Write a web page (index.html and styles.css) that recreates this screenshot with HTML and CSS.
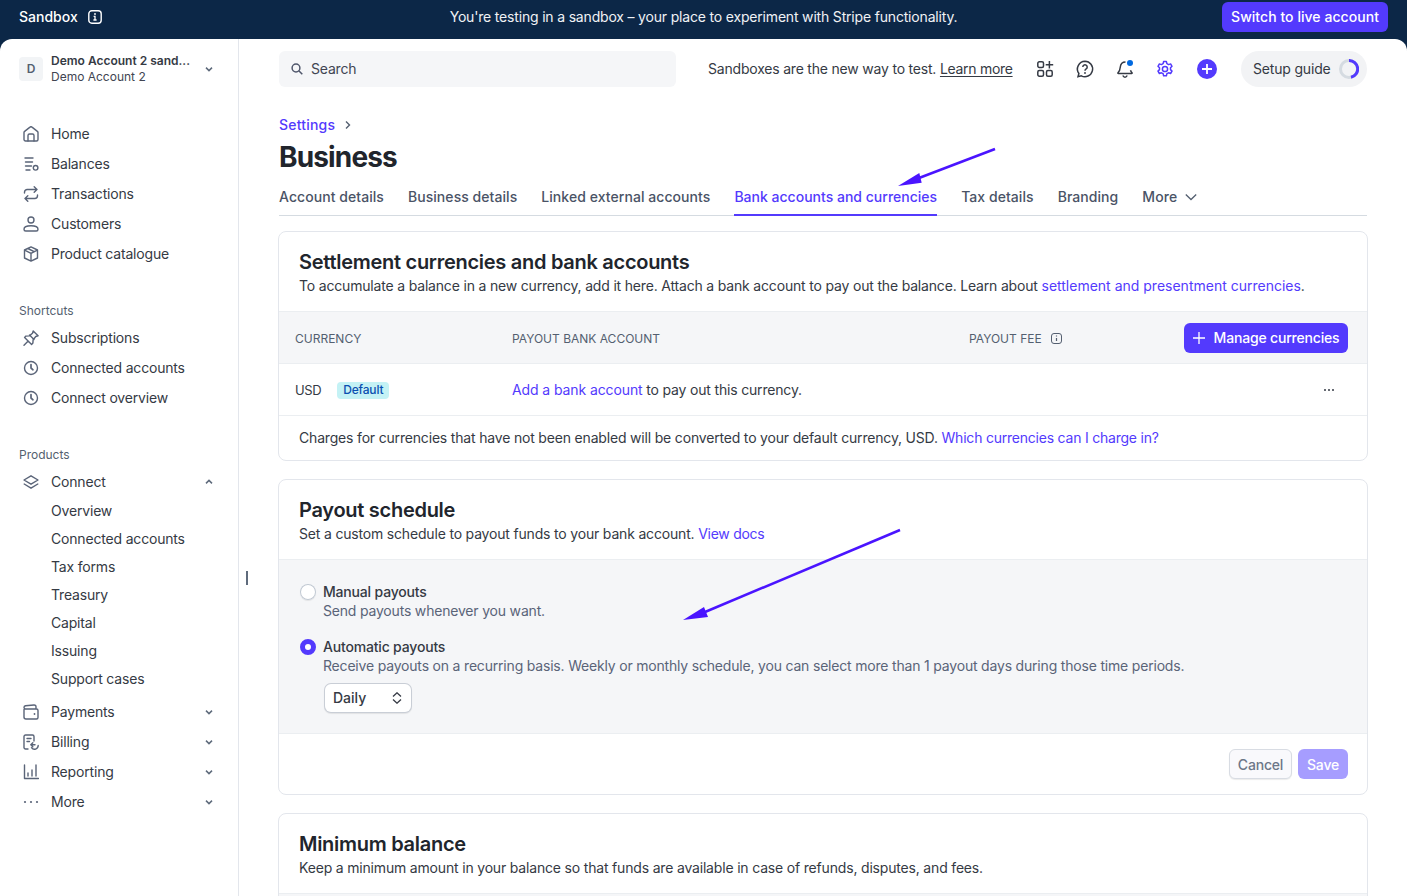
FILE: index.html
```html
<!DOCTYPE html>
<html lang="en">
<head>
<meta charset="utf-8">
<title>Business settings</title>
<link rel="stylesheet" href="styles.css">
</head>
<body>
<header class="topbar">
  <div class="topbar-left">
    <span>Sandbox</span>
    <svg class="i14" viewBox="0 0 14 14" fill="none" stroke="#fff" stroke-width="1.4"><rect x=".8" y=".8" width="12.4" height="12.4" rx="3"/><path d="M5.6 6.4H7v3.4M5.4 10h3.2" stroke-width="1.3"/><circle cx="7" cy="4" r=".9" fill="#fff" stroke="none"/></svg>
  </div>
  <div class="topbar-msg">You're testing in a sandbox – your place to experiment with Stripe functionality.</div>
  <div class="topbar-right"><button class="live-btn">Switch to live account</button></div>
</header>

<div class="shell">
  <aside class="sidebar">
    <div class="account">
      <div class="account-tile">D</div>
      <div class="account-text">
        <div class="account-name">Demo Account 2 sand...</div>
        <div class="account-sub">Demo Account 2</div>
      </div>
      <svg class="chev" viewBox="0 0 10 10" fill="none"><path d="M2 3.6 5 6.6l3-3"/></svg>
    </div>

    <nav class="nav-group nav-main">
      <a class="nav-item"><svg class="nav-icon" viewBox="0 0 16 16"><path d="M1 6.6c0-.5.2-.9.6-1.200L7 1.100c.6-.5 1.400-.5 2 0l5.400 4.300c.4.300.6.700.6 1.200v6.900c0 .8-.7 1.500-1.500 1.500h-11C1.700 15 1 14.300 1 13.500z"/><path d="M5 15V9.500C5 8.700 5.700 8 6.500 8h3c.8 0 1.500.7 1.500 1.500V15"/></svg>Home</a>
      <a class="nav-item"><svg class="nav-icon" viewBox="0 0 16 16"><path d="M2 2h8M2.500 6h7M2.500 10h6M3 14h4"/><circle cx="12.600" cy="11.800" r="2.300"/></svg>Balances</a>
      <a class="nav-item"><svg class="nav-icon" viewBox="0 0 16 16"><path d="M1.500 7V6.200C1.500 4.700 2.700 3.500 4.200 3.500H14M11.200.8 14 3.500l-2.800 2.700M14.500 9v.8c0 1.500-1.200 2.700-2.700 2.700H2M4.800 9.800 2 12.500l2.800 2.700"/></svg>Transactions</a>
      <a class="nav-item"><svg class="nav-icon" viewBox="0 0 16 16"><circle cx="8" cy="4" r="3"/><path d="M1 13.200C1 10.900 3.500 9.800 8 9.800s7 1.100 7 3.400c0 1-.7 1.800-1.700 1.800H2.700C1.700 15 1 14.200 1 13.200z"/></svg>Customers</a>
      <a class="nav-item"><svg class="nav-icon" viewBox="0 0 16 16"><path d="M8 .9 14.500 4v8L8 15.100 1.500 12V4zM1.700 4.100 8 7.300l6.300-3.200M8 7.300v7.700M4.800 2.500l6.400 3.200"/></svg>Product catalogue</a>
    </nav>

    <div class="nav-label">Shortcuts</div>
    <nav class="nav-group">
      <a class="nav-item"><svg class="nav-icon" viewBox="0 0 16 16"><path d="m1 15.200 4.200-4.200M10.200.9l4.900 4.900-2.300.7-2.700 3.200-.2 3.400-1.300 1.300-7-7 1.300-1.300 3.400-.2 3.200-2.700zM6.500 5l4.500 4.500"/></svg>Subscriptions</a>
      <a class="nav-item"><svg class="nav-icon" viewBox="0 0 16 16"><circle cx="8" cy="8" r="6.500"/><path d="M8 4.500V8l2 1.800" stroke-width="1.700"/></svg>Connected accounts</a>
      <a class="nav-item"><svg class="nav-icon" viewBox="0 0 16 16"><circle cx="8" cy="8" r="6.500"/><path d="M8 4.500V8l2 1.800" stroke-width="1.700"/></svg>Connect overview</a>
    </nav>

    <div class="nav-label">Products</div>
    <nav class="nav-group">
      <a class="nav-item"><svg class="nav-icon" viewBox="0 0 16 16"><path d="M8 1.800 15 6 8 10.200 1 6zM1.200 10 8 14.200 14.800 10"/></svg>Connect<svg class="chev" viewBox="0 0 10 10" fill="none"><path d="M2 6.400 5 3.400l3 3"/></svg></a>
      <a class="nav-sub">Overview</a>
      <a class="nav-sub">Connected accounts</a>
      <a class="nav-sub">Tax forms</a>
      <a class="nav-sub">Treasury</a>
      <a class="nav-sub">Capital</a>
      <a class="nav-sub">Issuing</a>
      <a class="nav-sub">Support cases</a>
      <a class="nav-item nav-after-sub"><svg class="nav-icon" viewBox="0 0 16 16"><path d="M1 5.500V13c0 1.100.9 2 2 2h10.500c.8 0 1.500-.7 1.500-1.500v-7c0-.8-.7-1.500-1.500-1.500H2.500C1.700 5 1 4.300 1 3.500 1 2.500 1.700 2 2.500 1.800L11 1c1-.1 2 .6 2 1.700V5"/><circle cx="11.500" cy="10" r=".9" fill="#5a6478" stroke="none"/></svg>Payments<svg class="chev" viewBox="0 0 10 10" fill="none"><path d="M2 3.600 5 6.600l3-3"/></svg></a>
      <a class="nav-item"><svg class="nav-icon" viewBox="0 0 16 16"><path d="M5 15H2.500C1.700 15 1 14.300 1 13.500v-11C1 1.700 1.700 1 2.500 1h7c.8 0 1.500.7 1.500 1.500V7M4 4.500h4M4 7.500h2.500M15.200 11.500a3.700 3.700 0 0 1-6.700 2.200M7.800 10.700H12M9.800 8.800 7.800 10.700l2 2"/></svg>Billing<svg class="chev" viewBox="0 0 10 10" fill="none"><path d="M2 3.600 5 6.600l3-3"/></svg></a>
      <a class="nav-item"><svg class="nav-icon" viewBox="0 0 16 16"><path d="M1.500 1v13.500H15.500M5 9v3M9 6v6M13 1v11"/></svg>Reporting<svg class="chev" viewBox="0 0 10 10" fill="none"><path d="M2 3.600 5 6.600l3-3"/></svg></a>
      <a class="nav-item"><svg class="nav-icon nav-dots" viewBox="0 0 16 16"><circle cx="2" cy="8" r="1.100"/><circle cx="8" cy="8" r="1.100"/><circle cx="14" cy="8" r="1.100"/></svg>More<svg class="chev" viewBox="0 0 10 10" fill="none"><path d="M2 3.600 5 6.600l3-3"/></svg></a>
    </nav>
  </aside>
  <div class="resize-handle"></div>

  <main class="main">
    <div class="toolbar">
      <div class="search">
        <svg class="i12" viewBox="0 0 12 12" fill="none" stroke="#4f566b" stroke-width="1.500"><circle cx="5" cy="5" r="3.900"/><path d="m8 8 3.300 3.300"/></svg>
        <span>Search</span>
      </div>
      <div class="toolbar-note">Sandboxes are the new way to test. <a class="underlined">Learn more</a></div>
      <div class="tool-icons">
        <svg class="tool-icon" viewBox="0 0 20 20" fill="none" stroke="#353a44" stroke-width="1.500"><rect x="2.800" y="2.800" width="5.700" height="5.700" rx="1.500"/><rect x="2.800" y="11.500" width="5.700" height="5.700" rx="1.500"/><rect x="11.500" y="11.500" width="5.700" height="5.700" rx="1.500"/><path d="M14.400 2v7.500M10.700 5.700h7.500"/></svg>
        <svg class="tool-icon" viewBox="0 0 20 20" fill="none" stroke="#353a44" stroke-width="1.500"><path d="M10 2.300a7.700 7.700 0 1 1-3.700 14.500l-3.300.9.900-3.200A7.700 7.700 0 0 1 10 2.300z"/><path d="M7.800 8a2.200 2.200 0 1 1 3.400 1.900c-.8.500-1.200 1-1.200 1.800"/><circle cx="10" cy="14" r=".9" fill="#353a44" stroke="none"/></svg>
        <svg class="tool-icon" viewBox="0 0 20 20" fill="none" stroke="#353a44" stroke-width="1.500"><path d="M10.500 3C7.500 3 5.600 5 5.300 8c-.2 2.500-.8 4.400-2.300 5.700-.3.300-.1.800.3.800h13.400c.4 0 .6-.5.300-.8-.7-.7-1.200-1.500-1.500-2.500M7.800 16.500c.5 1.100 1.300 1.700 2.200 1.700s1.700-.6 2.200-1.700"/><circle cx="15" cy="4" r="3" fill="#0069e0" stroke="none"/></svg>
        <svg class="tool-icon" viewBox="0 0 20 20" fill="none" stroke="#533afd" stroke-width="1.500"><circle cx="10" cy="10" r="2.600"/><path d="M8.600 2.600h2.800l.5 2.100 1.700.9 2-.7 1.400 2.400-1.500 1.500v1.800l1.500 1.500-1.400 2.400-2-.7-1.700.9-.5 2.100H8.600l-.5-2.100-1.700-.9-2 .7L3 12.100l1.500-1.500V8.800L3 7.300l1.400-2.400 2 .7 1.700-.9z" stroke-linejoin="round"/></svg>
        <svg class="tool-plus" viewBox="0 0 22 22"><circle cx="11" cy="11" r="10" fill="#533afd"/><path d="M11 6v10M6 11h10" stroke="#fff" stroke-width="1.800"/></svg>
      </div>
      <div class="setup-pill">
        <span>Setup guide</span>
        <svg class="setup-ring" viewBox="0 0 20 20" fill="none" stroke-width="3"><circle cx="10" cy="10" r="8.500" stroke="#d5dbe1"/><path d="M10 1.500A8.500 8.500 0 0 1 12 18.300" stroke="#533afd"/></svg>
      </div>
    </div>

    <div class="crumb"><a class="link link-med">Settings</a><svg class="i10" viewBox="0 0 10 10" fill="none" stroke="#545f70" stroke-width="1.400"><path d="m3 1.500 3.500 3.500L3 8.500"/></svg></div>
    <h1 class="page-title">Business</h1>

    <div class="tabs">
      <a class="tab">Account details</a>
      <a class="tab">Business details</a>
      <a class="tab">Linked external accounts</a>
      <a class="tab tab-active">Bank accounts and currencies</a>
      <a class="tab">Tax details</a>
      <a class="tab">Branding</a>
      <a class="tab tab-more">More<svg class="i12" viewBox="0 0 12 12" fill="none" stroke="#545f70" stroke-width="1.300"><path d="m.8 3.500 5.200 5 5.200-5"/></svg></a>
    </div>

    <section class="card card-first">
      <div class="card-head">
        <h2 class="card-title">Settlement currencies and bank accounts</h2>
        <p class="card-desc">To accumulate a balance in a new currency, add it here. Attach a bank account to pay out the balance. Learn about <a class="link link-wide">settlement and presentment currencies</a>.</p>
      </div>
      <div class="table-row table-head">
        <div>Currency</div>
        <div>Payout bank account</div>
        <div class="fee-cell">Payout fee <svg class="i11" viewBox="0 0 11 11" fill="none" stroke="#545f70"><rect x=".5" y=".5" width="10" height="10" rx="2.500"/><path d="M5.500 5v3M5.500 2.600v1" stroke-width="1.200"/></svg></div>
        <div class="action-cell"><button class="primary-btn"><svg class="i12" viewBox="0 0 12 12" stroke="#fff" stroke-width="1.300"><path d="M6 0v12M0 6h12"/></svg>Manage currencies</button></div>
      </div>
      <div class="table-row table-body">
        <div class="currency-cell"><span class="currency">USD</span><span class="badge">Default</span></div>
        <div class="payout-cell"><a class="link link-mid">Add a bank account</a> to pay out this currency.</div>
        <div></div>
        <div class="action-cell"><span class="dots-btn"><i></i><i></i><i></i></span></div>
      </div>
      <p class="card-note">Charges for currencies that have not been enabled will be converted to your default currency, USD. <a class="link link-note">Which currencies can I charge in?</a></p>
    </section>

    <section class="card">
      <div class="card-head">
        <h2 class="card-title">Payout schedule</h2>
        <p class="card-desc">Set a custom schedule to payout funds to your bank account. <a class="link link-tight">View docs</a></p>
      </div>
      <div class="options">
        <div class="option">
          <span class="radio"></span>
          <div>
            <div class="option-label">Manual payouts</div>
            <div class="option-desc">Send payouts whenever you want.</div>
          </div>
        </div>
        <div class="option option-second">
          <span class="radio radio-on"></span>
          <div>
            <div class="option-label">Automatic payouts</div>
            <div class="option-desc">Receive payouts on a recurring basis. Weekly or monthly schedule, you can select more than 1 payout days during those time periods.</div>
            <div class="select"><span>Daily</span><svg class="i12" viewBox="0 0 12 12" fill="none" stroke="#353a44" stroke-width="1.300"><path d="m2 4.500 4-3.700 4 3.700M2 7.500l4 3.700 4-3.700"/></svg></div>
          </div>
        </div>
      </div>
      <div class="card-foot">
        <button class="ghost-btn">Cancel</button>
        <button class="save-btn">Save</button>
      </div>
    </section>

    <section class="card">
      <div class="card-head">
        <h2 class="card-title">Minimum balance</h2>
        <p class="card-desc">Keep a minimum amount in your balance so that funds are available in case of refunds, disputes, and fees.</p>
      </div>
      <div class="card-tail"></div>
    </section>
  </main>
</div>

<svg class="arrows" viewBox="0 0 1407 896">
  <path class="arrow-line" d="M995 149 919 178"/>
  <polygon class="arrow-head" points="898,186 919.300,173 921.700,182.700"/>
  <path class="arrow-line" d="M900 530 705 612"/>
  <polygon class="arrow-head" points="683,620 704,607 708,617"/>
</svg>
</body>
</html>
```

FILE: styles.css
```css
* { box-sizing: border-box; }
html, body { margin: 0; height: 100%; }
body {
  position: relative;
  width: 1407px;
  height: 896px;
  overflow: hidden;
  background: #0c2747;
  font-family: Inter, "Liberation Sans", sans-serif;
  font-size: 14px;
  line-height: 20px;
  letter-spacing: -0.18px;
  color: #353a44;
}
a { text-decoration: none; color: inherit; }
button { font-family: inherit; cursor: pointer; letter-spacing: inherit; }
h1, h2, p { margin: 0; }

.i10 { width: 10px; height: 10px; flex: none; }
.i11 { width: 11px; height: 11px; flex: none; }
.i12 { width: 12px; height: 12px; flex: none; }
.i14 { width: 14px; height: 14px; flex: none; }

.topbar {
  height: 39px;
  display: grid;
  grid-template-columns: 1fr auto 1fr;
  padding: 2px 19px 7px;
  align-items: center;
  color: #fff;
}
.topbar-left { display: flex; align-items: center; gap: 10px; font-weight: 500; letter-spacing: 0; }
.topbar-msg { color: #f0f2f5; }
.topbar-right { display: flex; justify-content: flex-end; }
.live-btn {
  height: 30px;
  width: 166px;
  border: 0;
  border-radius: 6px;
  background: #533afd;
  color: #fff;
  font-size: 14px;
  font-weight: 500;
  letter-spacing: 0.05px;
  padding: 0 0 1px;
}

.shell {
  position: relative;
  display: flex;
  height: 857px;
  background: #fff;
  border-radius: 12px 12px 0 0;
  overflow: hidden;
}

.sidebar {
  width: 239px;
  flex: none;
  border-right: 1px solid #e3e6ec;
  padding: 18px 19px 0;
}
.account { display: flex; align-items: center; height: 24px; margin-bottom: 38px; letter-spacing: 0; }
.account-tile {
  width: 24px;
  height: 24px;
  border-radius: 4px;
  background: #f2f4f6;
  color: #545f70;
  font-size: 12px;
  font-weight: 600;
  display: flex;
  align-items: center;
  justify-content: center;
  margin-right: 8px;
}
.account-text { flex: 1; font-size: 12px; line-height: 16px; }
.account-name { font-weight: 600; color: #353a44; white-space: nowrap; }
.account-sub { color: #414552; }
.chev { width: 10px; height: 10px; flex: none; margin-left: auto; margin-right: 5px; }
.chev path { stroke: #5f6b7c; stroke-width: 1.500; fill: none; }
.account .chev { margin-left: 0; }

.nav-group { display: flex; flex-direction: column; }
.nav-item {
  height: 30px;
  display: flex;
  align-items: center;
  padding-left: 4px;
  color: #353a44;
}
.nav-icon {
  width: 16px;
  height: 16px;
  flex: none;
  margin-right: 12px;
  fill: none;
  stroke: #5a6478;
  stroke-width: 1.400;
  stroke-linecap: round;
  stroke-linejoin: round;
}
.nav-dots { fill: #5a6478; stroke: none; }
.nav-sub { height: 28px; display: flex; align-items: center; padding-left: 32px; color: #353a44; }
.nav-after-sub { margin-top: 4px; }
.nav-label {
  font-size: 12px;
  line-height: 16px;
  letter-spacing: 0;
  color: #545f70;
  margin: 34px 0 4px;
}
.resize-handle {
  position: absolute;
  left: 246px;
  top: 532px;
  width: 2px;
  height: 14px;
  background: #5f6b7c;
}

.main { flex: 1; min-width: 0; padding: 12px 40px 0; }

.toolbar { display: flex; align-items: center; height: 36px; }
.search {
  width: 397px;
  height: 36px;
  background: #f5f6f8;
  border-radius: 6px;
  display: flex;
  align-items: center;
  gap: 8px;
  padding-left: 12px;
  color: #414552;
}
.toolbar-note { margin-left: 32px; color: #353a44; white-space: nowrap; letter-spacing: -0.2px; }
.underlined { text-decoration: underline; text-underline-offset: 2px; letter-spacing: -0.3px; }
.tool-icons { display: flex; align-items: center; gap: 20px; margin-left: 22px; }
.tool-icon { width: 20px; height: 20px; flex: none; }
.tool-plus { width: 22px; height: 22px; flex: none; margin-left: 1px; }
.setup-pill {
  margin-left: auto;
  width: 126px;
  height: 36px;
  border-radius: 18px;
  background: #f2f3f5;
  display: flex;
  align-items: center;
  padding-left: 12px;
  gap: 8px;
  white-space: nowrap;
}
.setup-ring { width: 20px; height: 20px; flex: none; }

.crumb { display: flex; align-items: center; gap: 8px; margin-top: 28px; height: 20px; }
.page-title { font-size: 28px; line-height: 36px; font-weight: 700; color: #21252c; margin-top: 4px; letter-spacing: -0.85px; }

.tabs {
  display: flex;
  gap: 24px;
  margin-top: 12px;
  border-bottom: 1px solid #d5dbe1;
  letter-spacing: 0.06px;
}
.tab {
  padding-bottom: 8px;
  font-weight: 500;
  color: #4a5366;
  white-space: nowrap;
}
.tab-active { color: #533afd; box-shadow: inset 0 -2px 0 #533afd; margin-bottom: -1px; padding-bottom: 9px; letter-spacing: 0.01px; }
.tab-more { display: flex; align-items: flex-start; gap: 8px; }
.tab-more .i12 { margin-top: 4px; }

.card {
  margin: 18px -1px 0;
  border: 1px solid #e3e6ec;
  border-radius: 8px;
  overflow: hidden;
  background: #fff;
}
.card-first { margin-top: 15px; }
.card-head { padding: 18px 20px 15px; }
.card-title { font-size: 20px; line-height: 24px; font-weight: 600; color: #21252c; letter-spacing: -0.28px; }
.card-desc { margin-top: 2px; color: #353a44; }
.link { color: #533afd; }
.link-med { font-weight: 500; letter-spacing: 0.2px; }
.link-wide { letter-spacing: 0; }
.link-mid { letter-spacing: -0.1px; }
.link-tight { letter-spacing: -0.27px; }
.link-note { letter-spacing: -0.22px; }

.table-row {
  display: grid;
  grid-template-columns: 217px 457px 1fr auto;
  align-items: center;
  padding: 0 19px 0 16px;
  border-top: 1px solid #ebeef1;
}
.table-head {
  height: 52px;
  background: #f5f6f8;
  font-size: 12px;
  color: #545f70;
  text-transform: uppercase;
  letter-spacing: 0;
}
.table-head > div:not(.action-cell) { padding-top: 2px; }
.table-body { height: 52px; }
.fee-cell { display: flex; align-items: center; gap: 9px; }
.action-cell { display: flex; justify-content: flex-end; }
.primary-btn {
  height: 30px;
  width: 164px;
  border: 0;
  border-radius: 6px;
  background: #533afd;
  color: #fff;
  font-size: 14px;
  font-weight: 500;
  display: flex;
  align-items: center;
  justify-content: center;
  gap: 9px;
  padding: 0;
  text-transform: none;
  letter-spacing: -0.18px;
}
.currency-cell { display: flex; align-items: center; gap: 16px; }
.currency { font-size: 13px; letter-spacing: -0.4px; }
.badge {
  height: 17px;
  margin-top: 1px;
  padding: 0 6px;
  border-radius: 4px;
  background: #c4f2f5;
  color: #0b4fb0;
  font-size: 12px;
  line-height: 16px;
  font-weight: 500;
}
.dots-btn { display: flex; gap: 2px; margin-right: 14px; }
.dots-btn i { width: 2px; height: 2px; border-radius: 50%; background: #353a44; }
.card-note { border-top: 1px solid #ebeef1; padding: 12px 20px; }

.options {
  background: #f5f6f8;
  border-top: 1px solid #ebeef1;
  padding: 22px 20px 21px 21px;
}
.option { display: flex; gap: 7px; }
.option-second { margin-top: 17px; }
.option-label { line-height: 19px; font-weight: 500; color: #353a44; }
.option-desc { line-height: 19px; color: #5a6478; letter-spacing: -0.19px; }
.radio {
  width: 16px;
  height: 16px;
  flex: none;
  margin-top: 2px;
  border-radius: 50%;
  background: #fff;
  box-shadow: 0 0 0 1px #c0c8d2 inset, 0 1px 1px rgba(0,0,0,.08);
}
.radio-on { background: #fff; border: 5px solid #533afd; box-shadow: none; }
.select {
  display: flex;
  align-items: center;
  justify-content: space-between;
  width: 86px;
  height: 28px;
  margin: 9px 0 0 2px;
  padding: 0 8px;
  background: #fff;
  border-radius: 6px;
  box-shadow: 0 0 0 1px #c9ced6, 0 1px 1px 1px rgba(0,0,0,.08);
  font-weight: 500;
  letter-spacing: 0;
}
.card-foot {
  display: flex;
  justify-content: flex-end;
  gap: 6px;
  height: 61px;
  padding: 15px 19px 0 0;
  border-top: 1px solid #ebeef1;
}
.ghost-btn, .save-btn {
  height: 30px;
  border-radius: 6px;
  font-size: 14px;
  font-weight: 500;
  padding: 0;
}
.ghost-btn {
  width: 63px;
  border: 1px solid #d8dce3;
  background: #f9f9fc;
  color: #6c7688;
  box-shadow: 0 1px 1px rgba(0,0,0,.08);
}
.save-btn { width: 50px; border: 0; background: #a69dff; color: #fff; }
.card-tail { height: 40px; background: #f5f6f8; border-top: 1px solid #ebeef1; }

.arrows {
  position: absolute;
  left: 0;
  top: 0;
  width: 1407px;
  height: 896px;
  pointer-events: none;
}
.arrow-line { stroke: #4a14ff; stroke-width: 2.500; fill: none; }
.arrow-head { fill: #4a14ff; }
```
